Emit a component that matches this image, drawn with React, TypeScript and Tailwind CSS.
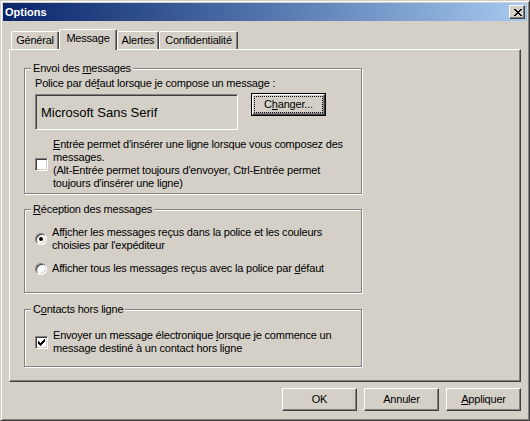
import React from 'react';

// Mnemonic letter, underlined like a classic Windows accelerator key
const K = ({ children }: { children: React.ReactNode }) => (
  <span className="underline decoration-1 underline-offset-[1px]">{children}</span>
);

function PixelGlyph({ rows }: { rows: string[] }) {
  const w = rows[0].length;
  const h = rows.length;
  return (
    <svg width={w} height={h} viewBox={`0 0 ${w} ${h}`} shapeRendering="crispEdges">
      {rows.flatMap((r, y) =>
        r.split('').map((c, x) =>
          c === '1' ? <rect key={`${x}-${y}`} x={x} y={y} width="1" height="1" fill="#000" /> : null
        )
      )}
    </svg>
  );
}

const CLOSE_X = ['11000011', '01100110', '00111100', '00011000', '00111100', '01100110', '11000011'];
const CHECK = ['0000001', '0000011', '1000111', '1101110', '1111100', '0111000', '0010000'];

function CheckBox({ checked }: { checked?: boolean }) {
  return (
    <div className="w-[13px] h-[13px] shrink-0 bg-white border border-t-[#808080] border-l-[#808080] border-r-white border-b-white shadow-[inset_1px_1px_0_#404040,inset_-1px_-1px_0_#d4d0c8] flex items-center justify-center">
      {checked && <PixelGlyph rows={CHECK} />}
    </div>
  );
}

function Radio({ checked }: { checked?: boolean }) {
  return (
    <div className="w-[12px] h-[12px] shrink-0 rounded-full bg-white border border-t-[#808080] border-l-[#808080] border-r-white border-b-white shadow-[inset_1px_1px_0_#404040,inset_-1px_-1px_0_#d4d0c8] flex items-center justify-center">
      {checked && <div className="w-[4px] h-[4px] rounded-full bg-black" />}
    </div>
  );
}

function GroupBox({ label, className, children }: { label: React.ReactNode; className: string; children: React.ReactNode }) {
  return (
    <div className={`w-[338px] border border-[#808080] shadow-[inset_1px_1px_0_#fff,1px_1px_0_#fff] ${className}`}>
      <div className="-mt-[7px] ml-[6px] px-[2px] w-fit h-[13px] bg-[#d4d0c8]">{label}</div>
      <div className="pl-[10px]">{children}</div>
    </div>
  );
}

function Button({ children }: { children: React.ReactNode }) {
  return (
    <div className="w-[75px] h-[23px] border border-t-white border-l-white border-r-[#404040] border-b-[#404040] shadow-[inset_-1px_-1px_0_#808080] flex items-center justify-center">
      {children}
    </div>
  );
}

const tabs = [
  { label: 'Général', w: 'w-[48px]' },
  { label: 'Message', w: 'w-[58px]', active: true },
  { label: 'Alertes', w: 'w-[42px]' },
  { label: 'Confidentialité', w: 'w-[79px]' },
];

export default function App() {
  return (
    <div className="w-[530px] h-[421px] bg-[#d4d0c8] border border-t-[#d4d0c8] border-l-[#d4d0c8] border-r-[#404040] border-b-[#404040] shadow-[inset_1px_1px_0_#fff,inset_-1px_-1px_0_#808080] p-[2px] text-[11px] leading-[13px] tracking-[-0.2px] text-black font-['Liberation_Sans',Arial,sans-serif] select-none">
      {/* title bar */}
      <div className="h-[18px] flex items-center justify-between pl-[2px] pr-[2px] bg-linear-to-r from-[#0a246a] to-[#a6caf0]">
        <span className="text-white font-bold tracking-normal">Options</span>
        <div className="w-[16px] h-[14px] bg-[#d4d0c8] border border-t-white border-l-white border-r-[#404040] border-b-[#404040] shadow-[inset_-1px_-1px_0_#808080] flex items-center justify-center pl-[1px]">
          <PixelGlyph rows={CLOSE_X} />
        </div>
      </div>

      <div className="px-[6px]">
        {/* tab strip */}
        <div className="flex items-start h-[20px] mt-[8px] pl-[2px]">
          {tabs.map((t) =>
            t.active ? (
              <div
                key={t.label}
                className={`${t.w} h-[21px] relative z-10 bg-[#d4d0c8] border-t border-l border-r border-t-white border-l-white border-r-[#404040] rounded-t-[2px] shadow-[inset_-1px_0_0_#808080] flex justify-center pt-[2px]`}
              >
                {t.label}
              </div>
            ) : (
              <div
                key={t.label}
                className={`${t.w} h-[18px] mt-[2px] border-t border-l border-r border-t-white border-l-white border-r-[#404040] rounded-t-[2px] shadow-[inset_-1px_0_0_#808080] flex justify-center pt-[2px]`}
              >
                {t.label}
              </div>
            )
          )}
        </div>

        {/* tab page */}
        <div className="h-[333px] border border-t-white border-l-white border-r-[#404040] border-b-[#404040] shadow-[inset_-1px_-1px_0_#808080] px-[14px] pt-[18px]">
          <GroupBox className="pb-[3px]" label={<>Envoi des <K>m</K>essages</>}>
            <div className="mt-[2px]">Police par dé<K>f</K>aut lorsque je compose un message :</div>
            <div className="flex items-start mt-[3px]">
              <div className="w-[203px] h-[36px] mt-[1px] border border-t-[#808080] border-l-[#808080] border-r-white border-b-white shadow-[inset_1px_1px_0_#404040,inset_-1px_-1px_0_#d4d0c8] flex items-center pl-[5px] text-[13px] leading-[15px] tracking-normal">
                Microsoft Sans Serif
              </div>
              <div className="ml-[13px] w-[75px] h-[23px] border border-black">
                <div className="h-full border border-t-white border-l-white border-r-[#404040] border-b-[#404040] shadow-[inset_-1px_-1px_0_#808080] p-[1px]">
                  <div className="h-full border border-dotted border-black flex items-center justify-center">
                    C<K>h</K>anger...
                  </div>
                </div>
              </div>
            </div>
            <div className="flex items-center gap-[5px] mt-[8px]">
              <CheckBox />
              <div className="whitespace-nowrap">
                <K>E</K>ntrée permet d'insérer une ligne lorsque vous composez des
                <br />
                messages.
                <br />
                (Alt-Entrée permet toujours d'envoyer, Ctrl-Entrée permet
                <br />
                toujours d'insérer une ligne)
              </div>
            </div>
          </GroupBox>

          <GroupBox className="mt-[15px] pb-[17px]" label={<><K>R</K>éception des messages</>}>
            <div className="flex items-center gap-[5px] mt-[10px]">
              <Radio checked />
              <div className="whitespace-nowrap">
                Aff<K>i</K>cher les messages reçus dans la police et les couleurs
                <br />
                choisies par l'expéditeur
              </div>
            </div>
            <div className="flex items-center gap-[5px] mt-[10px]">
              <Radio />
              <div className="whitespace-nowrap">
                Afficher tous les messages reçus avec la police par <K>d</K>éfaut
              </div>
            </div>
          </GroupBox>

          <GroupBox className="mt-[16px] pb-[11px]" label={<>C<K>o</K>ntacts hors ligne</>}>
            <div className="flex items-center gap-[5px] mt-[13px]">
              <CheckBox checked />
              <div className="whitespace-nowrap">
                Envoyer un message électronique <K>l</K>orsque je commence un
                <br />
                message destiné à un contact hors ligne
              </div>
            </div>
          </GroupBox>
        </div>

        {/* dialog buttons */}
        <div className="flex justify-end gap-[7px] mt-[6px]">
          <Button>OK</Button>
          <Button>Annuler</Button>
          <Button>
            <span>
              <K>A</K>ppliquer
            </span>
          </Button>
        </div>
      </div>
    </div>
  );
}
